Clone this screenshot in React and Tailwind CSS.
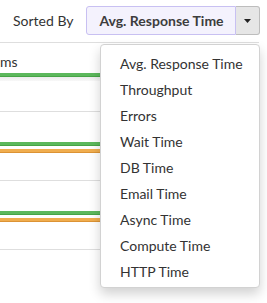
const options = [
  "Avg. Response Time",
  "Throughput",
  "Errors",
  "Wait Time",
  "DB Time",
  "Email Time",
  "Async Time",
  "Compute Time",
  "HTTP Time",
];

function Bars() {
  return (
    <div className="pt-[30px]">
      <div className="h-[4px] bg-[#5cb85c] border-b border-[#47a447]" />
      <div className="mt-[3px] h-[4px] bg-[#f0ad4e] border-b border-[#dc9335]" />
    </div>
  );
}

export default function App() {
  return (
    <div
      className="relative h-[303px] w-[267px] overflow-hidden bg-white text-[#333]"
      style={{ fontFamily: "Lato, 'Open Sans', sans-serif" }}
    >
      {/* Sort control */}
      <div className="flex h-[42px] items-start pt-[6px]">
        <div className="ml-[13px] flex h-[29px] items-center text-[14px]">
          Sorted By
        </div>
        <div className="ml-[13px] flex h-[29px]">
          <div className="flex w-[150px] items-center justify-center rounded-l-[3px] border border-[#c8c0f2] bg-[#f4f2fd] text-[14px] font-bold text-[#3d3d3d]">
            Avg. Response Time
          </div>
          <div className="flex w-[24px] items-center justify-center rounded-r-[3px] border border-l-0 border-[#bdbdbd] bg-[#e6e6e6]">
            <svg width="7" height="4" viewBox="0 0 7 4">
              <path d="M0 0h7L3.5 4z" fill="#222" />
            </svg>
          </div>
        </div>
      </div>

      {/* Rows behind the menu */}
      <div className="w-[259px]">
        <div className="h-[69px] border-t border-[#dedede]">
          <div className="h-[30px] pt-[9px] text-[14px] leading-[20px]">ms</div>
          <div className="h-[4px] bg-[#5cb85c] border-b border-[#47a447]" />
          <div className="h-[4px] bg-gradient-to-b from-[#ececec] to-[#f8f8f8]" />
        </div>
        <div className="h-[69px] border-t border-[#dedede]">
          <Bars />
        </div>
        <div className="h-[69px] border-t border-[#dedede]">
          <Bars />
        </div>
        <div className="h-[20px] border-t border-[#dedede]" />
      </div>

      {/* Dropdown menu */}
      <div className="absolute left-[100px] top-[44px] w-[160px] rounded-[4px] border border-[#d2d2d2] bg-white pt-[5px] pb-[3px] shadow-[0_6px_12px_rgba(0,0,0,0.18)]">
        {options.map((o) => (
          <div
            key={o}
            className="flex h-[26px] items-center pl-[19px] text-[14px] text-[#333]"
          >
            {o}
          </div>
        ))}
      </div>
    </div>
  );
}
